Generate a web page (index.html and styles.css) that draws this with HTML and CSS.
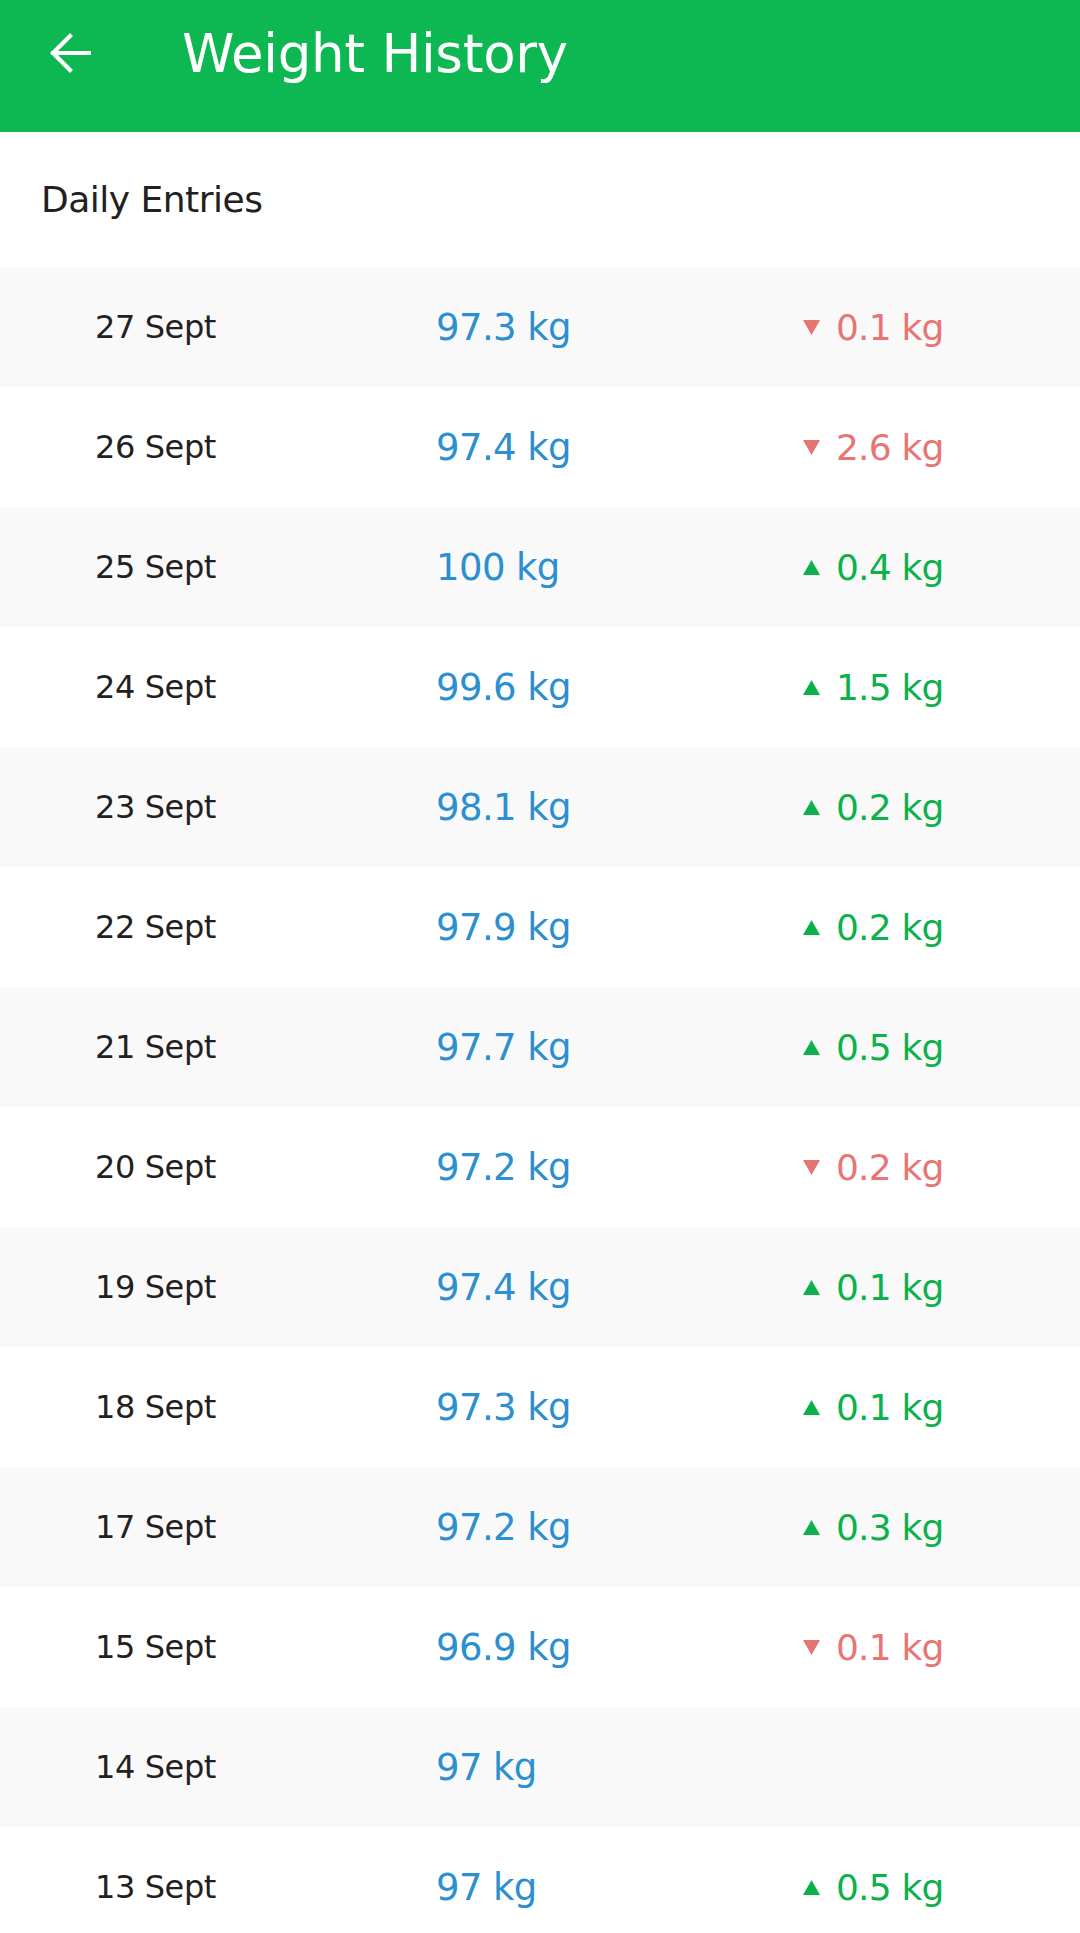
FILE: index.html
```html
<!DOCTYPE html>
<html>
<head>
<meta charset="utf-8">
<link rel="stylesheet" href="styles.css">
</head>
<body>
<div class="app">
  <header class="toolbar">
    <svg class="back" width="42" height="42" viewBox="0 0 42 42"><path d="M40 21H4M21 4L4 21l17 17" fill="none" stroke="#fff" stroke-width="4.2" stroke-linecap="square"/></svg>
    <h1 class="title">Weight History</h1>
  </header>
  <div class="section">Daily Entries</div>
  <div class="list">
    <div class="row"><span class="date">27 Sept</span><span class="weight">97.3 kg</span><span class="change down"><svg class="tri" viewBox="0 0 16 14"><path d="M0 0h16L8 14z"/></svg>0.1 kg</span></div>
    <div class="row"><span class="date">26 Sept</span><span class="weight">97.4 kg</span><span class="change down"><svg class="tri" viewBox="0 0 16 14"><path d="M0 0h16L8 14z"/></svg>2.6 kg</span></div>
    <div class="row"><span class="date">25 Sept</span><span class="weight">100 kg</span><span class="change up"><svg class="tri" viewBox="0 0 16 14"><path d="M8 0l8 14H0z"/></svg>0.4 kg</span></div>
    <div class="row"><span class="date">24 Sept</span><span class="weight">99.6 kg</span><span class="change up"><svg class="tri" viewBox="0 0 16 14"><path d="M8 0l8 14H0z"/></svg>1.5 kg</span></div>
    <div class="row"><span class="date">23 Sept</span><span class="weight">98.1 kg</span><span class="change up"><svg class="tri" viewBox="0 0 16 14"><path d="M8 0l8 14H0z"/></svg>0.2 kg</span></div>
    <div class="row"><span class="date">22 Sept</span><span class="weight">97.9 kg</span><span class="change up"><svg class="tri" viewBox="0 0 16 14"><path d="M8 0l8 14H0z"/></svg>0.2 kg</span></div>
    <div class="row"><span class="date">21 Sept</span><span class="weight">97.7 kg</span><span class="change up"><svg class="tri" viewBox="0 0 16 14"><path d="M8 0l8 14H0z"/></svg>0.5 kg</span></div>
    <div class="row"><span class="date">20 Sept</span><span class="weight">97.2 kg</span><span class="change down"><svg class="tri" viewBox="0 0 16 14"><path d="M0 0h16L8 14z"/></svg>0.2 kg</span></div>
    <div class="row"><span class="date">19 Sept</span><span class="weight">97.4 kg</span><span class="change up"><svg class="tri" viewBox="0 0 16 14"><path d="M8 0l8 14H0z"/></svg>0.1 kg</span></div>
    <div class="row"><span class="date">18 Sept</span><span class="weight">97.3 kg</span><span class="change up"><svg class="tri" viewBox="0 0 16 14"><path d="M8 0l8 14H0z"/></svg>0.1 kg</span></div>
    <div class="row"><span class="date">17 Sept</span><span class="weight">97.2 kg</span><span class="change up"><svg class="tri" viewBox="0 0 16 14"><path d="M8 0l8 14H0z"/></svg>0.3 kg</span></div>
    <div class="row"><span class="date">15 Sept</span><span class="weight">96.9 kg</span><span class="change down"><svg class="tri" viewBox="0 0 16 14"><path d="M0 0h16L8 14z"/></svg>0.1 kg</span></div>
    <div class="row"><span class="date">14 Sept</span><span class="weight">97 kg</span><span class="change"></span></div>
    <div class="row"><span class="date">13 Sept</span><span class="weight">97 kg</span><span class="change up"><svg class="tri" viewBox="0 0 16 14"><path d="M8 0l8 14H0z"/></svg>0.5 kg</span></div>
  </div>
</div>
</body>
</html>
```

FILE: styles.css
```css
html, body {
  margin: 0;
  padding: 0;
  background: #ffffff;
}
body {
  width: 1080px;
  height: 1933px;
  overflow: hidden;
  font-family: "DejaVu Sans", "Noto Sans", sans-serif;
}
.toolbar {
  height: 132px;
  background: #0db852;
  display: flex;
  align-items: flex-start;
  box-sizing: border-box;
  padding-top: 30px;
}
.back {
  margin-left: 49px;
  margin-top: 2px;
  flex: none;
}
.title {
  margin: 0 0 0 91px;
  color: #ffffff;
  font-weight: 400;
  font-size: 53px;
  line-height: 48px;
  letter-spacing: -0.3px;
}
.section {
  height: 135px;
  display: flex;
  align-items: center;
  padding-left: 41px;
  font-size: 36px;
  color: #212121;
  letter-spacing: -0.5px;
}
.row {
  height: 120px;
  display: grid;
  grid-template-columns: 341px 367px 1fr;
  align-items: center;
  padding-left: 95px;
}
.row:nth-child(odd) {
  background: #f9f9f9;
}
.date {
  font-size: 32px;
  color: #212121;
  letter-spacing: -0.4px;
}
.weight {
  font-size: 37px;
  color: #2b8fd0;
  letter-spacing: -0.6px;
}
.change {
  font-size: 36px;
  display: flex;
  align-items: center;
  letter-spacing: -0.8px;
}
.tri {
  width: 17px;
  height: 15px;
  margin-right: 16px;
  flex: none;
}
.down {
  color: #e87474;
}
.down .tri {
  fill: #e87474;
}
.up {
  color: #0db14b;
}
.up .tri {
  fill: #0db14b;
}
```
